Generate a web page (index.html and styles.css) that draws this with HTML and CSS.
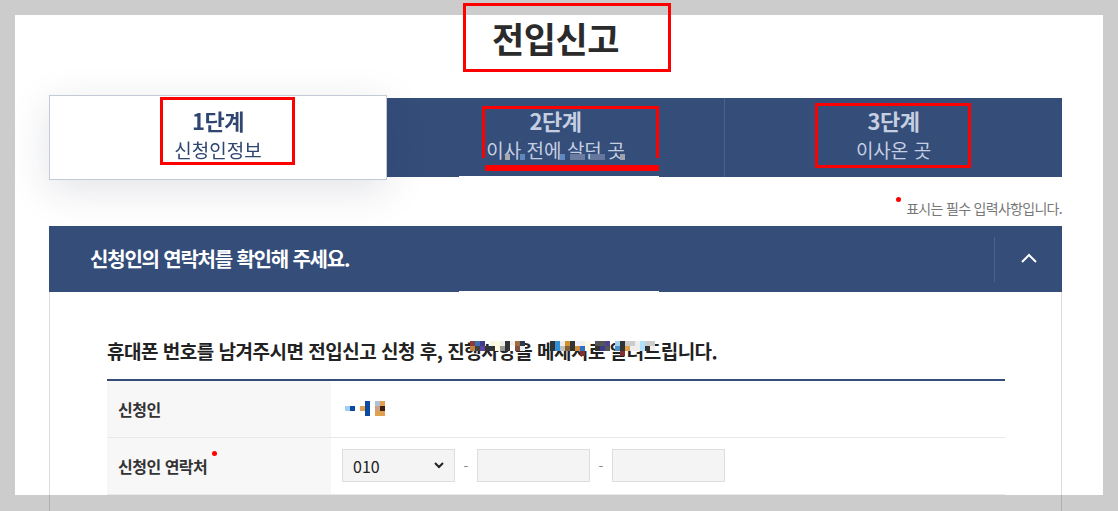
FILE: index.html
```html
<!DOCTYPE html>
<html lang="ko">
<head>
<meta charset="utf-8">
<title>전입신고</title>
<link rel="stylesheet" href="styles.css">
</head>
<body>
<div class="page">
  <h1 class="title">전입신고</h1>
  <ol class="steps">
    <li class="step active"><strong>1단계</strong><span>신청인정보</span></li>
    <li class="step mid"><strong>2단계</strong><span>이사 전에 살던 곳</span></li>
    <li class="step"><strong>3단계</strong><span>이사온 곳</span></li>
  </ol>
  <p class="req"><i class="dot"></i>표시는 필수 입력사항입니다.</p>
  <section class="panel">
    <header class="panel-head">
      <h2>신청인의 연락처를 확인해 주세요.</h2>
      <button class="toggle" type="button" aria-label="접기">
        <svg width="16" height="10" viewBox="0 0 16 10"><polyline points="1,9 8,2 15,9" fill="none" stroke="#fff" stroke-width="2"/></svg>
      </button>
    </header>
    <div class="panel-body">
      <p class="lead">휴대폰 번호를 남겨주시면 전입신고 신청 후, 진행사항을 메세지로 알려드립니다.</p>
      <table class="form">
        <tr>
          <th>신청인</th>
          <td>
            <svg class="mosaic" width="45" height="15" viewBox="0 0 45 15">
              <rect x="0" y="5" width="5" height="5" fill="#9fd0f0"/>
              <rect x="5" y="5" width="5" height="5" fill="#0b4aa0"/>
              <rect x="15" y="5" width="5" height="5" fill="#e0a050"/>
              <rect x="20" y="0" width="5" height="15" fill="#0b4aa0"/>
              <rect x="30" y="0" width="5" height="5" fill="#b0c0d8"/>
              <rect x="30" y="5" width="5" height="5" fill="#d0a080"/>
              <rect x="30" y="10" width="5" height="5" fill="#e0a050"/>
              <rect x="35" y="0" width="5" height="5" fill="#e0a050"/>
              <rect x="35" y="5" width="5" height="5" fill="#3a2010"/>
              <rect x="35" y="10" width="5" height="5" fill="#e0a050"/>
            </svg>
          </td>
        </tr>
        <tr>
          <th>신청인 연락처<i class="dot"></i></th>
          <td>
            <div class="phone">
              <div class="select-wrap">
                <select class="field sel"><option>010</option><option>011</option><option>016</option></select>
                <svg class="caret" width="10" height="7" viewBox="0 0 10 7"><polyline points="1,1 5,5 9,1" fill="none" stroke="#222" stroke-width="2"/></svg>
              </div>
              <span class="dash">-</span>
              <input class="field" type="text">
              <span class="dash">-</span>
              <input class="field" type="text">
            </div>
          </td>
        </tr>
      </table>
    </div>
  </section>
</div>

<svg class="blur blur-lead" width="190" height="15" viewBox="470 341 190 15">
  <rect x="470" y="341" width="5" height="5" fill="#8b3a3a"/><rect x="470" y="346" width="5" height="5" fill="#c08040"/>
  <rect x="475" y="341" width="5" height="5" fill="#3c6eb4"/><rect x="475" y="346" width="5" height="5" fill="#404040"/>
  <rect x="480" y="341" width="5" height="5" fill="#403c8c"/><rect x="480" y="346" width="5" height="5" fill="#5a46a0"/>
  <rect x="485" y="346" width="5" height="5" fill="#333"/>
  <rect x="490" y="341" width="5" height="5" fill="#f8f8e0"/><rect x="490" y="346" width="5" height="5" fill="#333"/>
  <rect x="495" y="341" width="5" height="5" fill="#fffbe0"/><rect x="495" y="346" width="5" height="5" fill="#fffbe0"/>
  <rect x="500" y="341" width="5" height="5" fill="#eee"/><rect x="500" y="346" width="5" height="5" fill="#999"/>
  <rect x="505" y="341" width="5" height="5" fill="#333"/><rect x="505" y="346" width="5" height="5" fill="#333"/>
  <rect x="510" y="341" width="5" height="5" fill="#f0f0f0"/><rect x="510" y="346" width="5" height="5" fill="#fff"/>
  <rect x="515" y="341" width="5" height="5" fill="#a06a3a"/><rect x="515" y="346" width="5" height="5" fill="#805040"/>
  <rect x="520" y="341" width="5" height="5" fill="#2a3a50"/><rect x="520" y="346" width="5" height="5" fill="#eee"/>
  <rect x="550" y="341" width="5" height="10" fill="#333"/>
  <rect x="555" y="341" width="5" height="10" fill="#3090d8"/>
  <rect x="560" y="341" width="5" height="5" fill="#eee"/><rect x="560" y="346" width="5" height="5" fill="#c0c0c0"/>
  <rect x="565" y="341" width="5" height="5" fill="#d09030"/><rect x="565" y="346" width="5" height="5" fill="#806030"/>
  <rect x="570" y="341" width="5" height="10" fill="#333"/>
  <rect x="575" y="341" width="5" height="5" fill="#f0f0f8"/><rect x="575" y="346" width="5" height="5" fill="#d09040"/>
  <rect x="580" y="341" width="5" height="5" fill="#f0f0f0"/><rect x="580" y="346" width="5" height="5" fill="#3070c0"/><rect x="580" y="351" width="5" height="5" fill="#803030"/>
  <rect x="585" y="341" width="5" height="10" fill="#fffbe0"/>
  <rect x="595" y="341" width="5" height="5" fill="#555"/><rect x="595" y="346" width="5" height="5" fill="#333"/>
  <rect x="600" y="341" width="5" height="5" fill="#555"/><rect x="600" y="346" width="5" height="5" fill="#3a3a90"/>
  <rect x="605" y="341" width="5" height="5" fill="#504090"/><rect x="605" y="346" width="5" height="5" fill="#555"/>
  <rect x="615" y="341" width="5" height="5" fill="#a0d0f0"/><rect x="615" y="346" width="5" height="5" fill="#5090c0"/>
  <rect x="620" y="341" width="5" height="10" fill="#333"/><rect x="620" y="351" width="5" height="5" fill="#803030"/>
  <rect x="625" y="341" width="5" height="5" fill="#ccc"/><rect x="625" y="346" width="5" height="5" fill="#e0a050"/>
  <rect x="630" y="341" width="5" height="5" fill="#ccc"/><rect x="630" y="346" width="5" height="5" fill="#eee"/>
  <rect x="635" y="341" width="5" height="10" fill="#eee"/>
  <rect x="640" y="341" width="5" height="10" fill="#b0e0ff"/>
  <rect x="645" y="341" width="5" height="5" fill="#ccc"/><rect x="645" y="346" width="5" height="5" fill="#333"/>
  <rect x="650" y="341" width="5" height="5" fill="#ccc"/><rect x="650" y="346" width="5" height="5" fill="#eee"/>
</svg>
<svg class="blur blur-tab" width="130" height="6" viewBox="500 154 130 6">
  <rect x="505" y="154" width="5" height="6" fill="#a8aab0"/>
  <rect x="520" y="154" width="5" height="6" fill="#5d88c0"/>
  <rect x="560" y="154" width="5" height="6" fill="#5d88c0"/>
  <rect x="570" y="154" width="15" height="6" fill="#6a7ca0"/>
  <rect x="590" y="154" width="15" height="6" fill="#65779c"/>
  <rect x="620" y="154" width="5" height="6" fill="#a0a4aa"/>
</svg>

<div class="frame"></div>
<div class="mark m1"></div>
<div class="mark m2"></div>
<div class="mark m3"></div>
<div class="mark-bar"></div>
<div class="mark m4"></div>
</body>
</html>
```
FILE: styles.css
```css
* { box-sizing: border-box; }
html, body { margin: 0; padding: 0; }
body {
  background: #fff;
  font-family: "Noto Sans CJK KR", "Noto Sans", sans-serif;
  color: #222;
  width: 1118px;
  height: 511px;
  overflow: hidden;
  position: relative;
}
.page {
  padding-left: 49px;
  width: 1062px;
}
.title {
  margin: 0;
  padding-top: 17px;
  height: 58px;
  line-height: 42px;
  font-size: 35px;
  font-weight: 700;
  letter-spacing: -0.5px;
  text-align: center;
  color: #2b2b2b;
}
.steps {
  list-style: none;
  margin: 40px 0 0;
  padding: 0;
  display: grid;
  grid-template-columns: 338px 337px 338px;
  height: 79px;
  background: #344d79;
  position: relative;
}
.steps::after {
  content: "";
  position: absolute;
  left: 410px;
  bottom: 0;
  width: 200px;
  height: 1px;
  background: #fff;
}
.step {
  display: flex;
  flex-direction: column;
  align-items: center;
  justify-content: center;
  padding-bottom: 6px;
  color: #c6cfe1;
}
.step + .step { border-left: 1px solid #4a6291; }
.step.mid { border-left: none; }
.step strong {
  font-size: 22px;
  font-weight: 700;
  line-height: 28px;
  letter-spacing: -0.5px;
  margin-bottom: 2px;
}
.step span {
  font-size: 19px;
  line-height: 28px;
}
.step.active {
  background: #fff;
  color: #2f4670;
  border: 1px solid #c3cad8;
  margin: -3px 0;
  box-shadow: 0 10px 40px rgba(30, 40, 70, 0.13);
  position: relative;
  z-index: 1;
}
.req {
  margin: 21px 0 0;
  height: 28px;
  line-height: 20px;
  text-align: right;
  font-size: 14px;
  letter-spacing: -0.7px;
  color: #777;
}
.dot {
  display: inline-block;
  width: 5px;
  height: 5px;
  border-radius: 50%;
  background: #f00;
  vertical-align: top;
}
.req .dot { margin: -1px 5px 0 0; }
.panel-head {
  height: 66px;
  background: #344d79;
  display: flex;
  align-items: center;
  padding-left: 41px;
  position: relative;
}
.panel-head::after {
  content: "";
  position: absolute;
  left: 410px;
  bottom: 0;
  width: 200px;
  height: 1px;
  background: #fff;
}
.panel-head h2 {
  flex: 1;
  margin: 0;
  color: #fff;
  font-size: 20px;
  font-weight: 700;
  letter-spacing: -1.2px;
  line-height: 28px;
}
.toggle {
  width: 68px;
  height: 45px;
  border: none;
  border-left: 1px solid #4c6392;
  background: transparent;
  padding: 0 0 2px;
  display: flex;
  align-items: center;
  justify-content: center;
}
.panel-body {
  border: 1px solid #dcdcdc;
  border-top: none;
  padding: 46px 56px 40px 57px;
}
.lead {
  margin: 0 0 15px;
  font-size: 19px;
  font-weight: 700;
  line-height: 26px;
  letter-spacing: -0.5px;
  color: #222;
}
.form {
  width: 100%;
  border-collapse: collapse;
  border-top: 2px solid #344d79;
}
.form th, .form td {
  height: 57px;
  border-bottom: 1px solid #e8e8e8;
  padding: 0 11px;
  vertical-align: middle;
}
.form th {
  width: 224px;
  background: #f7f7f7;
  text-align: left;
  font-size: 16px;
  font-weight: 700;
  letter-spacing: -0.5px;
  color: #333;
}
.form th .dot { margin: -3px 0 0 5px; }
.mosaic { display: block; margin-left: 3px; }
.phone {
  display: flex;
  align-items: center;
}
.select-wrap { position: relative; }
.field {
  width: 113px;
  height: 33px;
  border: 1px solid #ddd;
  background: #f4f4f4;
  border-radius: 0;
  font-family: "Noto Sans CJK KR", "Noto Sans", sans-serif;
  font-size: 16px;
  color: #222;
  padding: 0 10px;
  outline: none;
}
.sel {
  -webkit-appearance: none;
  appearance: none;
  display: block;
}
.caret {
  position: absolute;
  right: 11px;
  top: 13px;
  pointer-events: none;
}
.dash {
  width: 22px;
  text-align: center;
  color: #888;
  font-size: 14px;
}
.blur {
  position: absolute;
  display: block;
  pointer-events: none;
  z-index: 2;
}
.blur-lead { left: 470px; top: 341px; }
.blur-tab { left: 500px; top: 154px; }
.frame {
  position: fixed;
  left: 0;
  top: 0;
  width: 1118px;
  height: 511px;
  border-style: solid;
  border-color: rgba(0, 0, 0, 0.2);
  border-width: 15px 15px 16px 15px;
  pointer-events: none;
}
.mark {
  position: absolute;
  border: 3px solid #f00;
  pointer-events: none;
  z-index: 5;
}
.m1 { left: 463px; top: 3px; width: 208px; height: 69px; }
.m2 { left: 160px; top: 97px; width: 135px; height: 68px; }
.m3 { left: 482px; top: 106px; width: 177px; height: 52px; border-bottom: none; }
.m4 { left: 815px; top: 103px; width: 156px; height: 65px; }
.mark-bar {
  position: absolute;
  left: 485px;
  top: 165px;
  width: 174px;
  height: 6px;
  background: #f00;
  z-index: 5;
}
```
